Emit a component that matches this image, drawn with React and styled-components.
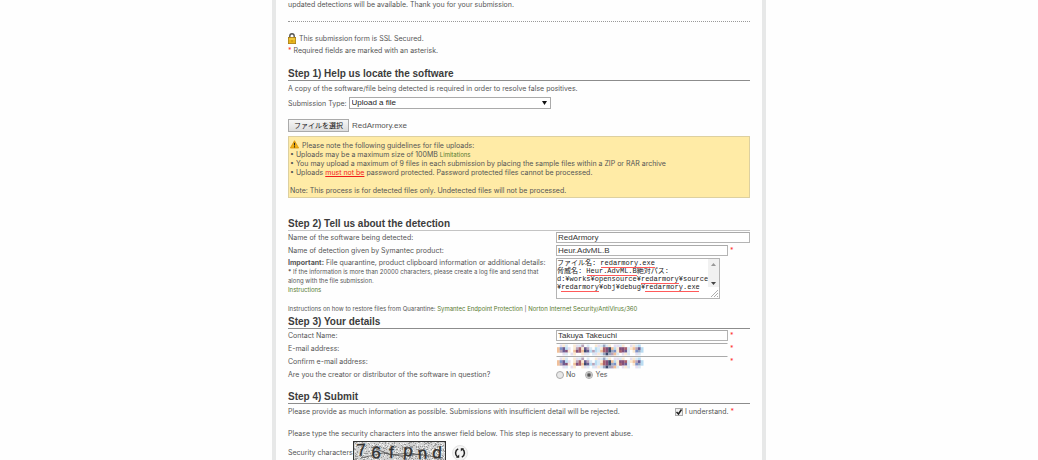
import React, { useRef } from "react";
import styled, { createGlobalStyle } from "styled-components";

const GlobalStyle = createGlobalStyle`
  * { box-sizing: border-box; }
  body {
    margin: 0;
    height: 100vh;
    overflow: hidden;
    background: #fefefe;
    color: #555;
    font: 7px/9px Inter, "Liberation Sans", Arial, "Noto Sans CJK JP", sans-serif;
  }
  input, select, textarea, button { font-family: "Liberation Sans", Arial, "Noto Sans CJK JP", sans-serif; margin: 0; }
`;

const Page = styled.main`
  max-width: 494px;
  min-height: 100vh;
  margin: 0 auto;
  padding: 0 12px;
  border: solid #e7e8e8;
  border-width: 0 4px;
`;

const Intro = styled.p`
  margin: 0 0 12px;
`;

const Divider = styled.hr`
  margin: 0 0 10px;
  border: 0;
  border-top: 1px dotted #999;
`;

const Line = styled.div`
  display: flex;
  align-items: center;
  gap: 3px;
  height: 12px;
`;

const Section = styled.section`
  margin-top: ${(p) => p.$gap || 0}px;
`;

const Heading = styled.h2`
  margin: 0 0 1px;
  border-bottom: 1px solid ${(p) => (p.$light ? "#c4c4c4" : "#8c8c8c")};
  color: #3c3c3c;
  font-family: "Liberation Sans", Arial, sans-serif;
  font-size: 10px;
  line-height: 13px;
`;

const Text = styled.p`
  margin: ${(p) => p.$gap || 0}px 0 0;
  font-size: ${(p) => (p.$small ? 6 : 7)}px;
  line-height: 13px;
`;

const Link = styled.a`
  color: #56792f;
  font-size: 6px;
  text-decoration: none;
`;

const Star = styled.span`
  color: #f33;
`;

const SelectRow = styled.div`
  display: flex;
  align-items: center;
  gap: 2px;
  margin-top: 2px;
`;

const SelectBox = styled.span`
  position: relative;
  flex: 0 1 202px;
  display: flex;
  svg { position: absolute; right: 4px; top: 4px; pointer-events: none; }
`;

const Select = styled.select`
  appearance: none;
  width: 100%;
  height: 12px;
  padding: 0 2px;
  border: 1px solid #aaa;
  border-radius: 0;
  background: #fff;
  color: #222;
  font-size: 8px;
  line-height: 10px;
`;

const FileRow = styled.div`
  display: flex;
  align-items: center;
  gap: 3px;
  margin: 10px 0 4px;
  font-family: "Liberation Sans", Arial, sans-serif;
  font-size: 8px;
`;

const FileButton = styled.button`
  width: 61px;
  height: 13px;
  padding: 0;
  border: 1px solid #aaa;
  background: linear-gradient(#f6f6f6, #ddd);
  color: #111;
  font-size: 7px;
  line-height: 10px;
  white-space: nowrap;
`;

const Notice = styled.div`
  padding: 4px 1px 2px;
  border: 1px solid #ddd0a0;
  background: #ffeba6;
  p { margin: 0; height: 9px; white-space: nowrap; }
  svg { margin: -3px 1px 0 0; vertical-align: -1px; }
`;

const Must = styled.span`
  color: #f21b1b;
  text-decoration: underline;
`;

const Fields = styled.div`
  display: grid;
  grid-template-columns: 58% 1fr;
  row-gap: 2px;
  line-height: 11px;
`;

const Field = styled.div`
  display: flex;
  align-items: center;
  gap: 2px;
  position: relative;
`;

const Input = styled.input`
  flex: 0 1 ${(p) => (p.$wide ? "194px" : "172px")};
  min-width: 0;
  height: 11px;
  padding: 0 1px;
  border: 1px solid ${(p) => (p.$masked ? "transparent" : "#b4b4b4")};
  border-top-color: #aaa;
  background: ${(p) => (p.$masked ? "transparent" : "#fff")};
  color: #333;
  font-size: 8px;
  line-height: 9px;
`;

const Mosaic = styled.svg`
  position: absolute;
  left: 0;
  top: 1px;
`;

const Details = styled.div`
  line-height: 9px;
  p { margin: 0; font-size: 6px; }
  label { display: block; white-space: nowrap; }
`;

const AreaBox = styled.div`
  position: relative;
  display: flex;
  max-width: 164px;
  height: 41px;
  border: 1px solid #b4b4b4;
  background: #fff;
`;

const Area = styled.textarea`
  flex: 1;
  min-width: 0;
  padding: 0;
  border: 0;
  resize: none;
  overflow: hidden;
  background: transparent;
  color: #222;
  font: 7px/8px "Liberation Mono", "Noto Sans CJK JP", monospace;
  white-space: pre;
`;

const Misspelled = styled.i`
  position: absolute;
  z-index: 1;
  height: 1px;
  background: #ff5a5a;
`;

const Scroller = styled.span`
  width: 11px;
  flex: none;
  background: linear-gradient(#f1f1f1 0 28px, #fff 28px);
`;

const Choice = styled.label`
  display: flex;
  align-items: center;
  gap: 2px;
  margin-right: 8px;
`;

const Radio = styled.input`
  appearance: none;
  width: 8px;
  height: 8px;
  border: 1px solid #aaa;
  border-radius: 50%;
  background: ${(p) => (p.defaultChecked ? "radial-gradient(#555 0 1px, #e8e8e8 3px)" : "#e8e8e8")};
`;

const Agreement = styled.div`
  display: flex;
  align-items: center;
  justify-content: space-between;
  padding-right: 16px;
  line-height: 13px;
  label { display: flex; align-items: center; gap: 2px; }
`;

const TickBox = styled.span`
  position: relative;
  display: flex;
  width: 8px;
  height: 8px;
  input {
    appearance: none;
    width: 8px;
    height: 8px;
    border: 1px solid #aaa;
    background: #f0f0f0;
  }
  svg { position: absolute; inset: 0; pointer-events: none; }
`;

const Captcha = styled.div`
  display: flex;
  align-items: center;
  margin-top: 1px;
`;

const Refresh = styled.button`
  display: flex;
  align-items: center;
  justify-content: center;
  width: 16px;
  height: 16px;
  margin-left: 6px;
  padding: 0;
  border: 1px solid #e4e4e4;
  border-radius: 50%;
  background: #f4f4f4;
`;

const marks = [
  { left: 44, top: 8, width: 54 },
  { left: 30, top: 16, width: 50 },
  { left: 84, top: 24, width: 38 },
  { left: 4, top: 32, width: 38 },
  { left: 88, top: 32, width: 54 },
];

const palette = {
  a: "#6a5c92", b: "#a8606c", c: "#f0c09a", d: "#b9dcf2", e: "#e6dff0", f: "#3c4a6c",
  g: "#9aa6c0", h: "#fbe9d2", i: "#84507a", j: "#d9e9f5", k: "#7c92c8", l: "#b8a3b8",
};

const maskRows = [
  ".ehj..hejl.j..hejgjh.eejh..ehjd",
  "ckade.hlbhalj.djhbifcdhiibjhclad",
  "claih.cibcfadldjcbifgkhbiaj.hkgd",
  "..ej.eh..hej.jehjgfglcj.ehj..ej.",
];

const noise = Array.from({ length: 760 }, (_, i) => {
  const a = Math.abs(Math.sin(i * 12.9898 + 4) * 43758.5453) % 1;
  const b = Math.abs(Math.sin(i * 78.233 + 9) * 24634.6345) % 1;
  return { x: Math.floor(a * 91) + 1, y: Math.floor(b * 22) + 1, fill: i % 3 ? "#9a9a9a" : "#f4f4f4" };
});

function Mask() {
  return (
    <Mosaic width="93" height="12" aria-hidden="true">
      {maskRows.flatMap((row, y) =>
        [...row].map((key, x) =>
          palette[key] ? (
            <rect key={`${y}-${x}`} x={1 + x * 2.7} y={y * 2.7 + 0.5} width="2.8" height="2.8" fill={palette[key]} />
          ) : null
        )
      )}
    </Mosaic>
  );
}

function Lock() {
  return (
    <svg width="8" height="11" viewBox="0 0 8 11" aria-hidden="true">
      <path d="M1.8 5V3a2.2 2.2 0 0 1 4.4 0v2" fill="none" stroke="#555" strokeWidth="1.4" />
      <rect x=".4" y="4.4" width="7.2" height="6.2" fill="#e8b51c" stroke="#a87c10" strokeWidth=".8" />
      <path d="M1.2 6h5.6" stroke="#f8db60" />
      <path d="M4 7v2" stroke="#c28f10" />
    </svg>
  );
}

function Warning() {
  return (
    <svg width="9" height="9" viewBox="0 0 9 9" aria-hidden="true">
      <path d="M4.5.7 8.6 8H.4Z" fill="#f6b311" stroke="#d99208" strokeWidth=".8" strokeLinejoin="round" />
      <path d="M4.5 2.8v2.8M4.5 6.3v1.1" stroke="#222" strokeWidth="1.1" />
    </svg>
  );
}

function CaptchaImage() {
  const letters = [
    ["7", 4, 15, -4], ["6", 18, 17, 4], ["f", 36, 17, 0], ["p", 50, 15, 3], ["n", 65, 18, -3], ["d", 79, 17, 3],
  ];
  return (
    <svg width="93" height="23" role="img" aria-label="Security characters">
      <rect x=".5" y=".5" width="92" height="22" fill="#d2d2d2" stroke="#333" />
      {noise.map((n, i) => (
        <rect key={i} x={n.x} y={n.y} width="1" height="1" fill={n.fill} />
      ))}
      <path d="M18 6 38 14 56 12 90 17M8 17 30 12 48 15 70 13" fill="none" stroke="#555" strokeWidth=".8" />
      {letters.map(([c, x, y, r]) => (
        <text key={c} x={x} y={y} transform={`rotate(${r} ${x} ${y})`} fontFamily="Liberation Sans" fontSize="17" fill="#333" stroke="#333" strokeWidth=".3">
          {c}
        </text>
      ))}
    </svg>
  );
}

export default function App() {
  const fileInput = useRef(null);
  return (
    <Page>
      <GlobalStyle />
      <Intro>updated detections will be available. Thank you for your submission.</Intro>
      <Divider />
      <Line><Lock /><span>This submission form is SSL Secured.</span></Line>
      <Line><span><Star>*</Star> Required fields are marked with an asterisk.</span></Line>

      <Section $gap={11}>
        <Heading>Step 1) Help us locate the software</Heading>
        <Text>A copy of the software/file being detected is required in order to resolve false positives.</Text>
        <SelectRow>
          <label htmlFor="type">Submission Type:</label>
          <SelectBox>
            <Select id="type"><option>Upload a file</option></Select>
            <svg width="5" height="4" aria-hidden="true"><path d="M0 0h5L2.5 4Z" fill="#111" /></svg>
          </SelectBox>
        </SelectRow>
        <FileRow>
          <FileButton type="button" onClick={() => fileInput.current.click()}>ファイルを選択</FileButton>
          <input ref={fileInput} type="file" hidden aria-label="File" />
          <span>RedArmory.exe</span>
        </FileRow>
        <Notice>
          <p><Warning /> Please note the following guidelines for file uploads:</p>
          <p>• Uploads may be a maximum size of 100MB <Link href="#limitations">Limitations</Link></p>
          <p>• You may upload a maximum of 9 files in each submission by placing the sample files within a ZIP or RAR archive</p>
          <p>• Uploads <Must>must not be</Must> password protected. Password protected files cannot be processed.</p>
          <p />
          <p>Note: This process is for detected files only. Undetected files will not be processed.</p>
        </Notice>
      </Section>

      <Section $gap={19}>
        <Heading $light>Step 2) Tell us about the detection</Heading>
        <Fields>
          <label htmlFor="software">Name of the software being detected:</label>
          <Field><Input id="software" $wide defaultValue="RedArmory" /></Field>
          <label htmlFor="detection">Name of detection given by Symantec product:</label>
          <Field><Input id="detection" defaultValue="Heur.AdvML.B" /><Star>*</Star></Field>
          <Details>
            <label htmlFor="info"><b>Important:</b> File quarantine, product clipboard information or additional details:</label>
            <p><b>*</b> If the information is more than 20000 characters, please create a log file and send that<br />along with the file submission.</p>
            <p><Link href="#instructions">Instructions</Link></p>
          </Details>
          <AreaBox>
            <Area
              id="info"
              spellCheck={false}
              defaultValue={"ファイル名: redarmory.exe\n脅威名: Heur.AdvML.B絶対パス:\nd:¥works¥opensource¥redarmory¥source\n¥redarmory¥obj¥debug¥redarmory.exe"}
            />
            {marks.map((m, i) => <Misspelled key={i} style={m} />)}
            <Scroller>
              <svg width="11" height="39" aria-hidden="true">
                <path d="M3 7 5.5 4 8 7Z" fill="#999" />
                <path d="M3 23h5L5.5 26Z" fill="#444" />
                <path d="M3 38 10 31M6 38 10 34M9 38 10 37" stroke="#999" strokeWidth=".8" />
              </svg>
            </Scroller>
          </AreaBox>
        </Fields>
        <Text $small $gap={3}>
          Instructions on how to restore files from Quarantine: <Link href="#sep">Symantec Endpoint Protection</Link> | <Link href="#norton">Norton Internet Security/AntiVirus/360</Link>
        </Text>
      </Section>

      <Section>
        <Heading>Step 3) Your details</Heading>
        <Fields>
          <label htmlFor="contact">Contact Name:</label>
          <Field><Input id="contact" defaultValue="Takuya Takeuchi" /><Star>*</Star></Field>
          <label htmlFor="email">E-mail address:</label>
          <Field><Input id="email" type="email" $masked /><Mask /><Star>*</Star></Field>
          <label htmlFor="confirm">Confirm e-mail address:</label>
          <Field><Input id="confirm" type="email" $masked /><Mask /><Star>*</Star></Field>
          <span>Are you the creator or distributor of the software in question?</span>
          <Field>
            <Choice><Radio type="radio" name="creator" />No</Choice>
            <Choice><Radio type="radio" name="creator" defaultChecked />Yes</Choice>
          </Field>
        </Fields>
      </Section>

      <Section $gap={10}>
        <Heading>Step 4) Submit</Heading>
        <Agreement>
          <span>Please provide as much information as possible. Submissions with insufficient detail will be rejected.</span>
          <label>
            <TickBox>
              <input type="checkbox" defaultChecked />
              <svg width="8" height="8" aria-hidden="true"><path d="m1.5 4 2 2 3-4.5" fill="none" stroke="#222" strokeWidth="1.5" /></svg>
            </TickBox>
            <span>I understand. <Star>*</Star></span>
          </label>
        </Agreement>
        <Text $gap={9}>Please type the security characters into the answer field below. This step is necessary to prevent abuse.</Text>
        <Captcha>
          <span>Security characters</span>
          <CaptchaImage />
          <Refresh type="button" aria-label="New characters">
            <svg width="12" height="12" viewBox="0 0 12 12" aria-hidden="true">
              <path d="M4.2 1.8C.8 3.5.8 8 3.5 9.8M7.8 10.2C11.2 8.5 11.2 4 8.5 2.2" fill="none" stroke="#222" strokeWidth="1.5" />
              <path d="M2 10.8h3.2V7.6ZM10 1.2H6.8v3.2Z" fill="#222" />
            </svg>
          </Refresh>
        </Captcha>
      </Section>
    </Page>
  );
}
